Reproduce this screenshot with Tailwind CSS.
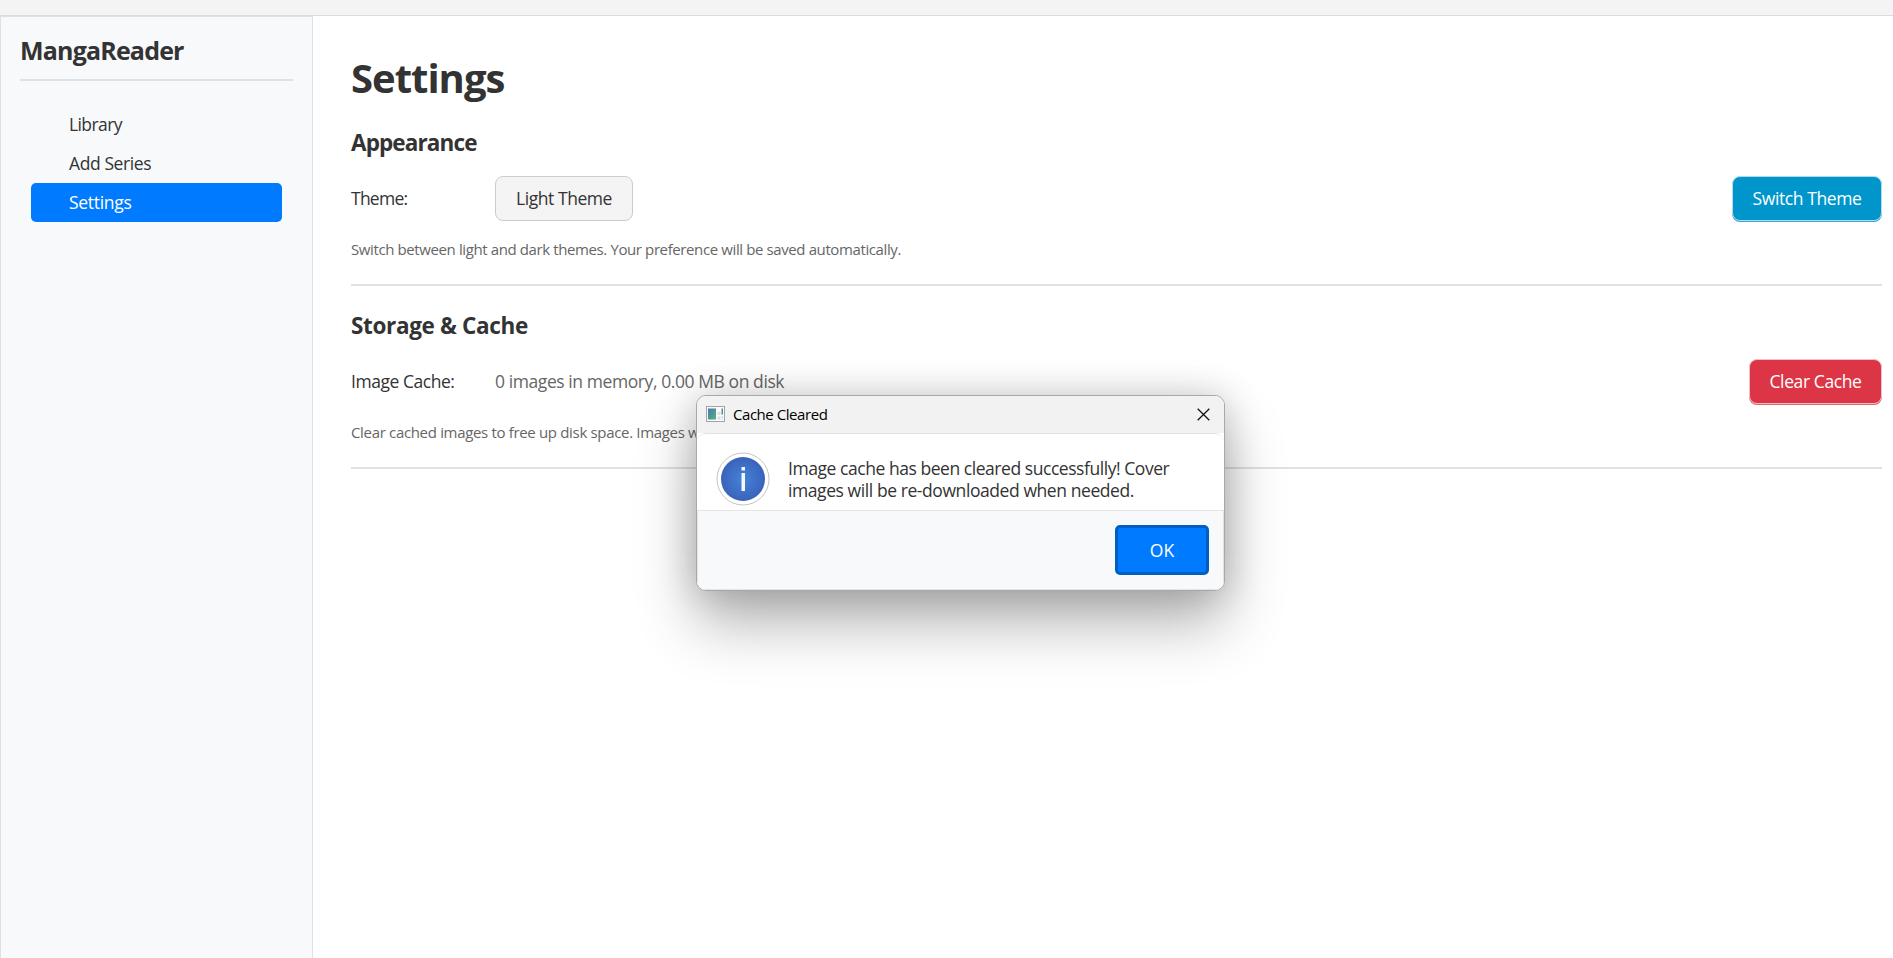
<!DOCTYPE html>
<html lang="en">
<head>
<meta charset="utf-8">
<title>MangaReader</title>
<script src="https://cdn.jsdelivr.net/npm/@tailwindcss/browser@4"></script>
</head>
<body class="relative flex h-[958px] w-[1893px] flex-col overflow-hidden bg-white font-['Open_Sans',sans-serif] text-[17.5px] leading-6 tracking-[-0.4px] whitespace-nowrap text-[#333]">
  <div class="h-4 shrink-0 border-b border-[#dcdcdc] bg-[#f4f4f4]"></div>
  <div class="flex min-h-0 flex-1">
    <aside class="flex w-[313px] shrink-0 flex-col border-x border-t border-[#dee2e6] bg-[#f8f9fb] px-[19px]">
      <h1 class="mt-[17px] h-[47px] border-b-2 border-[#dee2e6] text-[25px] leading-[32px] font-bold tracking-[-0.82px]">MangaReader</h1>
      <nav class="mt-6 flex flex-col px-[11px]">
        <a class="flex h-[39px] items-center pb-0.5 pl-[38px] tracking-[-0.6px]">Library</a>
        <a class="flex h-[39px] items-center pb-0.5 pl-[38px]">Add Series</a>
        <a class="flex h-[39px] items-center rounded-[5px] bg-[#007bff] pb-px pl-[38px] tracking-[-0.3px] text-white">Settings</a>
      </nav>
    </aside>
    <main class="flex flex-1 flex-col pr-[11px] pl-[38px]">
      <h2 class="mt-9 h-[52px] text-[40px] leading-[52px] font-bold tracking-[-1px]">Settings</h2>
      <section class="mt-6 flex flex-col border-b-2 border-[#dee2e6] pb-6">
        <h3 class="h-[30px] text-[22.5px] leading-[30px] font-bold tracking-[-0.88px]">Appearance</h3>
        <div class="mt-[18px] flex h-[46px] items-start">
          <span class="w-36 pt-2.5 tracking-[-0.75px]">Theme:</span>
          <button class="flex h-[45px] w-[138px] items-center justify-center rounded-lg border border-[#ccc] bg-[#f4f4f4] pb-0.5 tracking-[-0.44px]">Light Theme</button>
          <button class="ml-auto flex h-[45px] w-[150px] items-center justify-center rounded-lg border border-[#b5dbea] bg-[#0096cc] pb-px text-white shadow-[0_1px_0_#3aabd6]">Switch Theme</button>
        </div>
        <p class="mt-[15px] h-[23px] text-[15px] tracking-[-0.39px] text-[#666]">Switch between light and dark themes. Your preference will be saved automatically.</p>
      </section>
      <section class="mt-[25px] flex flex-col border-b-2 border-[#dee2e6] pb-6">
        <h3 class="h-[30px] text-[22.5px] leading-[30px] font-bold tracking-[-0.34px]">Storage &amp; Cache</h3>
        <div class="mt-[18px] flex h-[46px] items-start">
          <span class="w-36 pt-2.5 tracking-[-0.46px]">Image Cache:</span>
          <span class="pt-2.5 tracking-[-0.42px] text-[#666]">0 images in memory, 0.00 MB on disk</span>
          <button class="ml-auto flex h-[45px] w-[133px] items-center justify-center rounded-lg border border-[#eec0c4] bg-[#dc3545] pb-px text-white shadow-[0_1px_0_#e2606c]">Clear Cache</button>
        </div>
        <p class="mt-[15px] h-[23px] text-[15px] tracking-[-0.33px] text-[#666]">Clear cached images to free up disk space. Images w</p>
      </section>
    </main>
  </div>

  <div role="dialog" class="absolute top-[395px] left-[696px] flex h-[196px] w-[529px] flex-col overflow-hidden rounded-[10px] border border-[#a9a9a9] bg-white shadow-[0_32px_60px_rgba(0,0,0,0.3),0_0_36px_rgba(0,0,0,0.18)]">
    <header class="flex h-[37px] shrink-0 items-start bg-[#f2f2f2] pr-[14px] pl-[9px] text-[15px] text-black">
      <svg class="mt-[10px] h-4 w-[19px]" viewBox="0 0 19 16">
        <defs><linearGradient id="app" x1="0" y1="0" x2="1" y2="1"><stop offset="0" stop-color="#4779b0"/><stop offset="1" stop-color="#55b27c"/></linearGradient></defs>
        <rect x=".5" y=".5" width="18" height="15" fill="#fafafa" stroke="#a0a4ac"/>
        <rect x="2" y="2.500" width="8" height="11" fill="url(#app)"/>
        <rect x="11.500" y="6" width="3" height="3" fill="#ddd"/><rect x="11.500" y="10.500" width="3" height="3" fill="#ddd"/>
        <rect x="15.500" y="2.500" width="1.500" height="6" fill="#4c93a0"/><rect x="15.500" y="10" width="1.500" height="3.500" fill="#ddd"/>
      </svg>
      <span class="mt-1.5 ml-2 tracking-[-0.45px]">Cache Cleared</span>
      <svg class="mt-3 ml-auto h-[13px] w-[13px]" viewBox="0 0 13 13"><path d="M.7.7 12.300 12.300M12.300.7.7 12.300" stroke="#111" stroke-width="1.300"/></svg>
    </header>
    <div class="flex h-[77px] shrink-0 rounded-t-[9px] border-t border-[#dee2e6] pl-[19px]">
      <svg class="mt-[18px] h-[54px] w-[54px]" viewBox="0 0 54 54">
        <defs><radialGradient id="info"><stop offset="0" stop-color="#4584d8"/><stop offset="1" stop-color="#3a62bb"/></radialGradient></defs>
        <circle cx="27" cy="27" r="26" fill="#fff" stroke="#c4c4c4"/>
        <circle cx="27" cy="27" r="22" fill="url(#info)"/>
        <rect x="25.500" y="15" width="3.500" height="3.500" fill="#f4f8ff"/><rect x="25.500" y="21" width="3.500" height="18" fill="#f4f8ff"/>
      </svg>
      <div class="mt-[23px] ml-[18px] leading-[22px]">
        <p class="tracking-[-0.45px]">Image cache has been cleared successfully! Cover</p>
        <p class="tracking-[-0.42px]">images will be re-downloaded when needed.</p>
      </div>
    </div>
    <footer class="flex flex-1 items-start justify-end border border-[#e2e4e6] bg-[#f8f9fb] pt-[14px] pr-[14px]">
      <button class="flex h-[50px] w-[94px] items-center justify-center rounded-[5px] border-[3px] border-[#005fc4] bg-[#007bff] pb-px tracking-normal text-white">OK</button>
    </footer>
  </div>
</body>
</html>
